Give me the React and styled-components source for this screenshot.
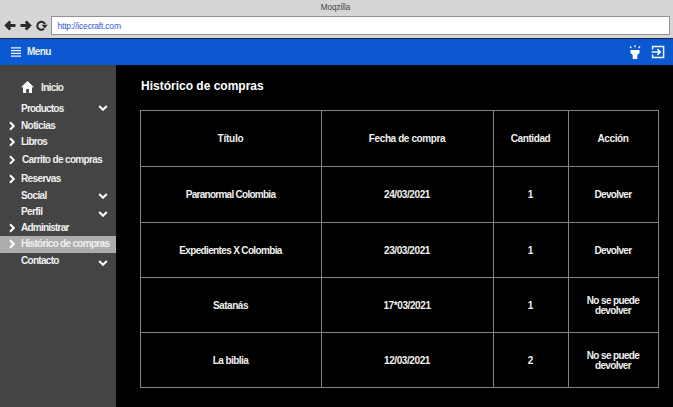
import React from 'react';
import styled, { createGlobalStyle } from 'styled-components';

const Global = createGlobalStyle`
  * { box-sizing: border-box; }
  body { margin: 0; background: #000; overflow: hidden; }
`;

const Page = styled.div`
  width: 673px;
  height: 407px;
  display: flex;
  flex-direction: column;
  background: #000;
  color: #f0f0f0;
  font-family: "Liberation Sans", Arial, sans-serif;
  font-weight: 700;
  font-size: 10px;
`;

const Browser = styled.header`
  height: 39px;
  flex: none;
  background: #d6d6d6;
  border-bottom: 1px solid #1d2b42;
`;

const WindowTitle = styled.div`
  height: 16px;
  padding-right: 2px;
  line-height: 15px;
  text-align: center;
  font-size: 8.2px;
  letter-spacing: -0.05px;
  font-weight: 400;
  color: #444;
`;

const AddressBar = styled.div`
  display: flex;
  align-items: center;
  padding: 0 3px 0 4px;
  height: 19px;
`;

const NavIcon = styled.svg`
  flex: none;
  width: 12px;
  height: 12px;
  margin-right: ${(p) => p.$gap}px;
  fill: none;
  stroke: #2b2b2b;
  stroke-width: 2.9;
`;

const Address = styled.div`
  flex: 1;
  height: 19px;
  padding-left: 5.5px;
  line-height: 18px;
  background: #fff;
  border: 1px solid #929292;
  font-size: 8.5px;
  letter-spacing: -0.2px;
  font-weight: 400;
  color: #3458d8;
`;

const TopBar = styled.nav`
  height: 26px;
  flex: none;
  display: flex;
  align-items: center;
  padding: 0 8px 0 11px;
  background: #0b58d0;
`;

const MenuLabel = styled.span`
  flex: 1;
  padding-left: 6px;
  padding-bottom: 1px;
  font-size: 10px;
  letter-spacing: -0.6px;
`;

const BarIcon = styled.svg`
  flex: none;
  width: ${(p) => p.$w}px;
  height: ${(p) => p.$h}px;
  margin-left: ${(p) => p.$left || 0}px;
  fill: none;
  stroke: #f5f8ff;
`;

const Body = styled.div`
  flex: 1;
  min-height: 0;
  display: flex;
`;

const Sidebar = styled.aside`
  width: 116px;
  flex: none;
  padding-top: 12px;
  background: #444;
`;

const Item = styled.div`
  display: flex;
  align-items: center;
  height: ${(p) => p.$height || 16}px;
  margin-top: ${(p) => p.$top || 0}px;
  padding-right: 8px;
  background: ${(p) => (p.$active ? '#adadad' : 'transparent')};
`;

const Lead = styled.span`
  width: ${(p) => p.$width}px;
  flex: none;
  display: flex;
  padding-left: ${(p) => p.$inset}px;
`;

const ItemLabel = styled.span`
  flex: 1;
  white-space: nowrap;
  line-height: 12px;
  letter-spacing: ${(p) => p.$track || 0}px;
`;

const Chevron = styled.svg`
  flex: none;
  width: ${(p) => (p.$down ? 10 : 6)}px;
  height: ${(p) => (p.$down ? 6 : 10)}px;
  margin-top: ${(p) => p.$drop || 0}px;
  fill: none;
  stroke: #fff;
  stroke-width: 2;
`;

const HomeIcon = styled.svg`
  width: 13px;
  height: 12px;
  margin-top: -2px;
  fill: #fff;
`;

const Main = styled.main`
  flex: 1;
  padding: 13px 14px 0 24px;
`;

const Heading = styled.h1`
  margin: 0 0 15px 1px;
  height: 17px;
  line-height: 17px;
  font-size: 12px;
  color: #fff;
`;

const Table = styled.div`
  display: grid;
  grid-template-columns: 181px 172px 75px 90px;
  grid-template-rows: 56px 56px 55px 55px 55px;
  width: 519px;
  border-top: 1px solid #848484;
  border-left: 1px solid #848484;
`;

const Cell = styled.div`
  display: flex;
  align-items: center;
  justify-content: center;
  text-align: center;
  line-height: 9.5px;
  padding: 1px 14px 0 13px;
  border-right: 1px solid #848484;
  border-bottom: 1px solid #848484;
  letter-spacing: ${(p) => p.$track}px;
`;

const entries = [
  { label: 'Productos', down: true, top: 2, drop: -2, track: -0.78 },
  { label: 'Noticias', right: true, top: 0.5, track: -0.6 },
  { label: 'Libros', right: true, track: -0.75 },
  { label: 'Carrito de compras', right: true, top: 2.5, shift: 1, track: -0.64 },
  { label: 'Reservas', right: true, top: 3, track: -0.6 },
  { label: 'Social', down: true, top: 0.5, track: -0.65 },
  { label: 'Perfil', down: true, drop: 4, track: -0.6 },
  { label: 'Administrar', right: true, track: -0.78 },
  { label: 'Histórico de compras', right: true, active: true, height: 17, track: -0.7 },
  { label: 'Contacto', down: true, drop: 5, track: -0.7 },
];

const rows = [
  [['Título', -0.2], ['Fecha de compra', -0.4], ['Cantidad', -0.4], ['Acción', -0.35]],
  [['Paranormal Colombia', -0.73], ['24/03/2021', -0.4], ['1', 0], ['Devolver', -0.65]],
  [['Expedientes X Colombia', -0.65], ['23/03/2021', -0.4], ['1', 0], ['Devolver', -0.65]],
  [['Satanás', -0.45], ['17*03/2021', -0.4], ['1', 0], ['No se puede devolver', -0.64]],
  [['La biblia', -0.55], ['12/03/2021', -0.4], ['2', 0], ['No se puede devolver', -0.64]],
];

export default function App() {
  return (
    <Page>
      <Global />
      <Browser>
        <WindowTitle>Moqzilla</WindowTitle>
        <AddressBar>
          <NavIcon $gap={4} viewBox="0 0 12 12"><path d="M11.5 5.5H2.5M6.3 1.5L2.3 5.5L6.3 9.5" /></NavIcon>
          <NavIcon $gap={4} viewBox="0 0 12 12"><path d="M.5 5.5H9.5M5.7 1.5L9.7 5.5L5.7 9.5" /></NavIcon>
          <NavIcon $gap={3} viewBox="0 0 12 12">
            <path d="M8 8.8A4 4 0 1 1 9 4.2" strokeWidth="2" />
            <path d="M5.6 4.7H11.8L8.7 8.4Z" fill="#2b2b2b" stroke="none" />
          </NavIcon>
          <Address>http://icecraft.com</Address>
        </AddressBar>
      </Browser>
      <TopBar>
        <BarIcon $w={10} $h={10} viewBox="0 0 10 10"><path d="M0 .8H10M0 3.6H10M0 6.4H10M0 9.2H10" strokeWidth="1.3" /></BarIcon>
        <MenuLabel>Menu</MenuLabel>
        <BarIcon $w={12} $h={14} viewBox="0 0 12 14">
          <path d="M1.5 5H10.5V8L8.3 10V14H3.7V10L1.5 8Z" fill="#fff" stroke="none" />
          <path d="M6 .3V2.3M1 1.5L2.4 2.9M11 1.5L9.6 2.9" strokeWidth="1.4" />
        </BarIcon>
        <BarIcon $w={14} $h={14} $left={10} viewBox="0 0 14 14">
          <path d="M1.6 4.6V1.5H12.6V12.5H1.6V9.4" strokeWidth="1.5" />
          <path d="M.6 7H9M6.4 4.2L9.3 7L6.4 9.8" strokeWidth="1.6" />
        </BarIcon>
      </TopBar>
      <Body>
        <Sidebar>
          <Item $height={22}>
            <Lead $width={41} $inset={21}>
              <HomeIcon viewBox="0 0 13 12"><path d="M6.5 0L13 6.2H11V12H7.8V8H5.2V12H2V6.2H0Z" /></HomeIcon>
            </Lead>
            <ItemLabel $track={-0.65}>Inicio</ItemLabel>
          </Item>
          {entries.map((e) => (
            <Item key={e.label} $height={e.height} $top={e.top} $active={e.active}>
              <Lead $width={21 + (e.shift || 0)} $inset={9}>
                {e.right && <Chevron viewBox="0 0 6 10"><path d="M1 1.2L4.8 5L1 8.8" /></Chevron>}
              </Lead>
              <ItemLabel $track={e.track}>{e.label}</ItemLabel>
              {e.down && <Chevron $down $drop={e.drop} viewBox="0 0 10 6"><path d="M1.2 1L5 4.8L8.8 1" /></Chevron>}
            </Item>
          ))}
        </Sidebar>
        <Main>
          <Heading>Histórico de compras</Heading>
          <Table>
            {rows.flatMap((row, r) =>
              row.map(([text, track], c) => <Cell key={`${r}-${c}`} $track={track}>{text}</Cell>),
            )}
          </Table>
        </Main>
      </Body>
    </Page>
  );
}
